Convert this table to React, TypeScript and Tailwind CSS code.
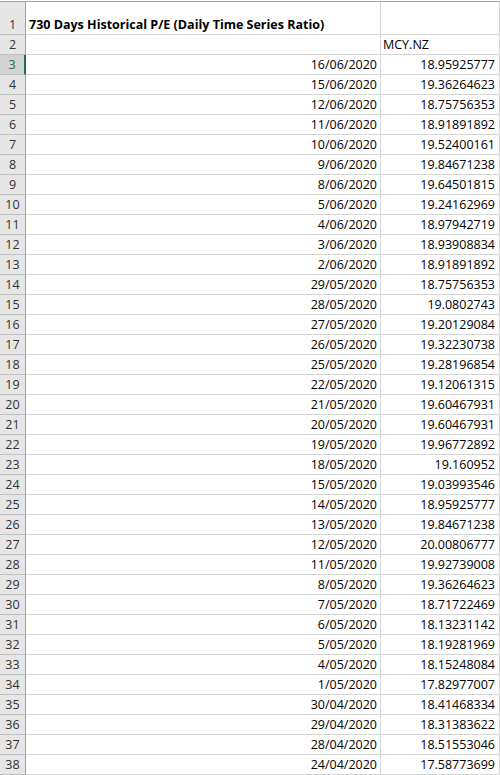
const rows: [string, string][] = [
  ["16/06/2020", "18.95925777"],
  ["15/06/2020", "19.36264623"],
  ["12/06/2020", "18.75756353"],
  ["11/06/2020", "18.91891892"],
  ["10/06/2020", "19.52400161"],
  ["9/06/2020", "19.84671238"],
  ["8/06/2020", "19.64501815"],
  ["5/06/2020", "19.24162969"],
  ["4/06/2020", "18.97942719"],
  ["3/06/2020", "18.93908834"],
  ["2/06/2020", "18.91891892"],
  ["29/05/2020", "18.75756353"],
  ["28/05/2020", "19.0802743"],
  ["27/05/2020", "19.20129084"],
  ["26/05/2020", "19.32230738"],
  ["25/05/2020", "19.28196854"],
  ["22/05/2020", "19.12061315"],
  ["21/05/2020", "19.60467931"],
  ["20/05/2020", "19.60467931"],
  ["19/05/2020", "19.96772892"],
  ["18/05/2020", "19.160952"],
  ["15/05/2020", "19.03993546"],
  ["14/05/2020", "18.95925777"],
  ["13/05/2020", "19.84671238"],
  ["12/05/2020", "20.00806777"],
  ["11/05/2020", "19.92739008"],
  ["8/05/2020", "19.36264623"],
  ["7/05/2020", "18.71722469"],
  ["6/05/2020", "18.13231142"],
  ["5/05/2020", "18.19281969"],
  ["4/05/2020", "18.15248084"],
  ["1/05/2020", "17.82977007"],
  ["30/04/2020", "18.41468334"],
  ["29/04/2020", "18.31383622"],
  ["28/04/2020", "18.51553046"],
  ["24/04/2020", "17.58773699"],
];

function RowHeader({ n, selected }: { n: number; selected?: boolean }) {
  return (
    <div
      className={`flex items-end justify-center border-b border-[#bfbfbf] pb-[1px] leading-[16px] ${
        selected
          ? "bg-[#d2d2d2] text-[#217346] border-r-2 border-r-[#217346]"
          : "bg-[#e6e6e6] text-[#333333] border-r border-r-[#9e9e9e]"
      }`}
    >
      {n}
    </div>
  );
}

export default function App() {
  return (
    <div
      className="h-[775px] w-[500px] overflow-hidden bg-white pt-px text-[12.5px] text-black"
      style={{ fontFamily: '"Open Sans", "Noto Sans", sans-serif' }}
    >
      <div className="grid grid-cols-[26px_355px_119px] border-t border-[#a6a6a6]">
        {/* Row 1: title */}
        <div className="flex h-[33px] items-end justify-center border-b border-r border-b-[#bfbfbf] border-r-[#9e9e9e] bg-[#e6e6e6] pb-[1px] leading-[16px] text-[#333333]">
          1
        </div>
        <div className="flex h-[33px] items-end whitespace-nowrap border-b border-r border-[#d4d4d4] pb-[1px] pl-[3px] font-bold leading-[16px]">
          730 Days Historical P/E (Daily Time Series Ratio)
        </div>
        <div className="h-[33px] border-b border-r border-[#d4d4d4]" />

        {/* Row 2: ticker */}
        <RowHeader n={2} />
        <div className="h-[20px] border-b border-r border-[#d4d4d4]" />
        <div className="flex h-[20px] items-end border-b border-r border-[#d4d4d4] pb-[1px] pl-[2px] leading-[16px]">
          MCY.NZ
        </div>

        {rows.map(([date, pe], i) => (
          <div key={date + i} className="contents">
            <RowHeader n={i + 3} selected={i === 0} />
            <div className="flex h-[20px] items-end justify-end border-b border-r border-[#d4d4d4] pb-[1px] pr-[3px] leading-[16px]">
              {date}
            </div>
            <div className="flex h-[20px] items-end justify-end border-b border-r border-[#d4d4d4] pb-[1px] pr-[4px] leading-[16px]">
              {pe}
            </div>
          </div>
        ))}
      </div>
      <div className="flex h-[2px] border-t border-[#a6a6a6]">
        <div className="ml-[388px] h-full w-px bg-[#a6a6a6]" />
        <div className="ml-[84px] h-full w-px bg-[#a6a6a6]" />
      </div>
    </div>
  );
}
